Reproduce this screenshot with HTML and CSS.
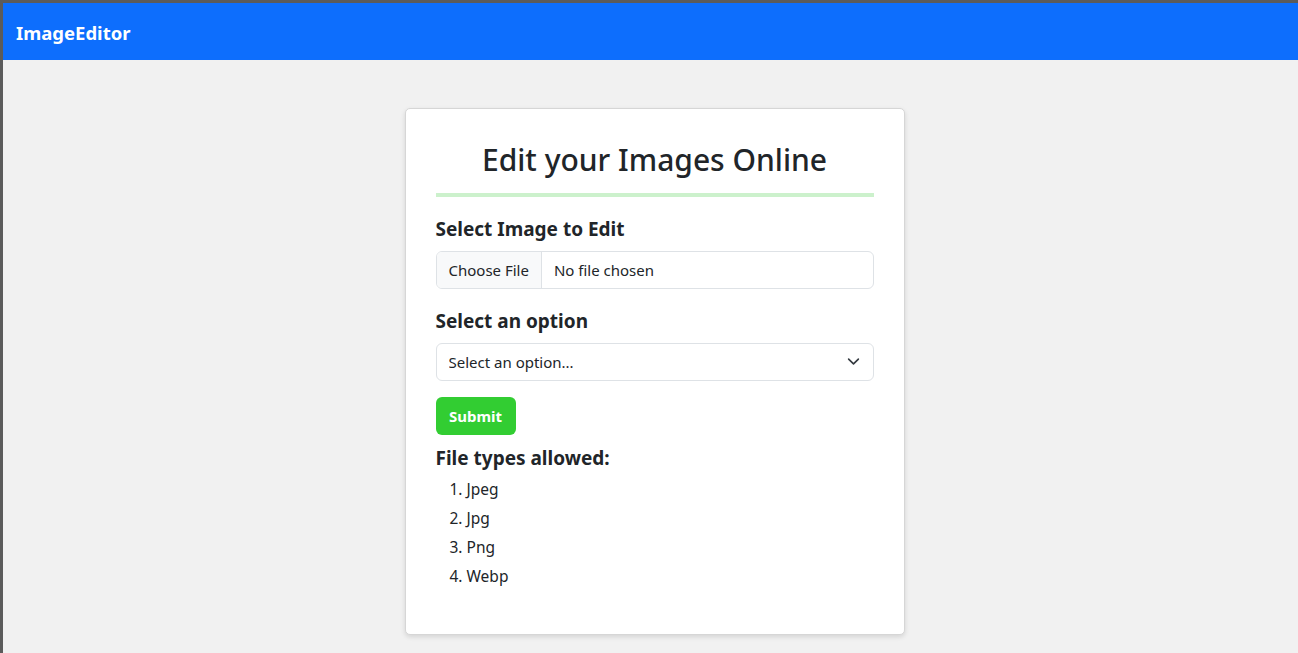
FILE: index.html
```html
<!DOCTYPE html>
<html lang="en">
<head>
<meta charset="utf-8">
<title>ImageEditor</title>
<link rel="stylesheet" href="styles.css">
</head>
<body>
<div class="frame">
  <nav class="navbar">
    <a class="brand" href="#">ImageEditor</a>
  </nav>
  <main class="main">
    <div class="card">
      <h2 class="title">Edit your Images Online</h2>
      <hr class="rule">
      <form class="form">
        <label class="label" for="file">Select Image to Edit</label>
        <input class="file-input" id="file" type="file">
        <label class="label label-gap" for="opt">Select an option</label>
        <div class="select-wrap">
          <select class="select" id="opt">
            <option>Select an option...</option>
          </select>
          <svg class="chevron" width="16" height="16" viewBox="0 0 16 16"><path d="M2 5l6 6 6-6" fill="none" stroke="#343a40" stroke-width="2" stroke-linecap="round" stroke-linejoin="round"/></svg>
        </div>
        <button class="submit" type="button">Submit</button>
      </form>
      <h5 class="types">File types allowed:</h5>
      <ol class="list">
        <li>Jpeg</li>
        <li>Jpg</li>
        <li>Png</li>
        <li>Webp</li>
      </ol>
    </div>
  </main>
</div>
</body>
</html>
```
FILE: styles.css
```css
* { box-sizing: border-box; }
html, body { margin: 0; padding: 0; }
body {
  font-family: "Noto Sans", "Open Sans", sans-serif;
  color: #212529;
  font-size: 16px;
  line-height: 1.5;
}
.frame {
  min-height: 653px;
  background: #f1f1f1;
  border-top: 3px solid #5b5b5b;
  border-left: 3px solid #5b5b5b;
}
.navbar {
  height: 57px;
  background: #0d6efd;
  display: flex;
  align-items: center;
  padding: 3px 0 0 13px;
}
.brand {
  color: #fff;
  font-weight: 700;
  font-size: 18.5px;
  text-decoration: none;
}
.main {
  display: flex;
  justify-content: center;
  padding: 48px 0 0 8px;
}
.card {
  width: 500px;
  background: #fff;
  border: 1px solid #d6d6d6;
  border-radius: 5px;
  box-shadow: 0 2px 5px rgba(0,0,0,0.12);
  padding: 32px 30px 29px;
}
.title {
  margin: 0;
  text-align: center;
  font-size: 30px;
  font-weight: 500;
  line-height: 38px;
}
.rule {
  margin: 14px 0 20px;
  border: 0;
  height: 4px;
  background: #ccf1cc;
}
.form { display: flex; flex-direction: column; align-items: flex-start; }
.label {
  font-size: 19px;
  font-weight: 700;
  line-height: 24px;
  margin-bottom: 10px;
}
.label-gap { margin-top: 20px; }
.file-input {
  width: 100%;
  height: 38px;
  border: 1px solid #dee2e6;
  border-radius: 6px;
  font-family: inherit;
  font-size: 15px;
  color: #212529;
  padding: 0;
  overflow: hidden;
  background: #fff;
}
.file-input::file-selector-button {
  height: 36px;
  margin: 0 12px 0 0;
  padding: 0 12px;
  border: 0;
  border-right: 1px solid #dee2e6;
  background: #f8f9fa;
  font-family: inherit;
  font-size: 15px;
  color: #212529;
}
.select-wrap {
  position: relative;
  width: 100%;
}
.select {
  width: 100%;
  height: 38px;
  appearance: none;
  -webkit-appearance: none;
  border: 1px solid #dee2e6;
  border-radius: 6px;
  background: #fff;
  font-family: inherit;
  font-size: 15px;
  color: #212529;
  padding: 0 36px 0 12px;
}
.chevron {
  position: absolute;
  right: 14px;
  top: 12px;
  width: 13px;
  height: 13px;
  pointer-events: none;
}
.submit {
  margin-top: 16px;
  height: 38px;
  width: 80px;
  border: 0;
  border-radius: 6px;
  background: #32cd32;
  color: #fff;
  font-family: inherit;
  font-weight: 700;
  font-size: 15px;
}
.types {
  margin: 11px 0 7px;
  font-size: 19px;
  font-weight: 700;
  line-height: 24px;
}
.list {
  margin: 0 0 17px;
  padding-left: 31px;
  font-size: 15.5px;
}
.list li {
  line-height: 24px;
  margin-bottom: 5px;
}
.list li:last-child { margin-bottom: 0; }
```
